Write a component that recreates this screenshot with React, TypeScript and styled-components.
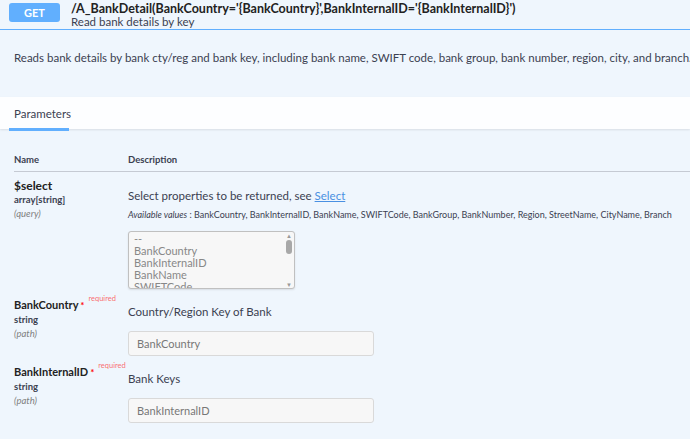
import styled, { createGlobalStyle } from "styled-components";

const Global = createGlobalStyle`
  body { margin: 0; background: #eff6fd; font-family: Lato, "Liberation Sans", sans-serif; color: #3b4151; }
`;

const params = [
  { name: "$select", type: "array[string]", where: "(query)", required: false },
  { name: "BankCountry", type: "string", where: "(path)", required: true, desc: "Country/Region Key of Bank" },
  { name: "BankInternalID", type: "string", where: "(path)", required: true, desc: "Bank Keys" },
];

export default function App() {
  return (
    <>
      <Global />
      <Page>
        <Summary>
          <Method>GET</Method>
          <PathBlock>
            <Path>/A_BankDetail(BankCountry='&#123;BankCountry&#125;',BankInternalID='&#123;BankInternalID&#125;')</Path>
            <SummaryText>Read bank details by key</SummaryText>
          </PathBlock>
        </Summary>
        <Description>
          Reads bank details by bank cty/reg and bank key, including bank name, SWIFT code, bank group, bank number, region, city, and branch.
        </Description>
        <TabBar>
          <Tab>Parameters</Tab>
        </TabBar>
        <Table>
          <HeadRow>
            <HeadCell>Name</HeadCell>
            <HeadCell>Description</HeadCell>
          </HeadRow>
          {params.map((p) => (
            <Row key={p.name} $first={p.name === "$select"}>
              <NameCell>
                <ParamName $big={p.name === "$select"}>
                  {p.name}
                  {p.required && (
                    <>
                      <Star> *</Star>
                      <Required>required</Required>
                    </>
                  )}
                </ParamName>
                <ParamType>{p.type}</ParamType>
                <ParamIn>{p.where}</ParamIn>
              </NameCell>
              <DescCell>
                {p.name === "$select" ? (
                  <>
                    <DescText>
                      Select properties to be returned, see <Link href="#">Select</Link>
                    </DescText>
                    <Avail>
                      <i>Available values</i> : BankCountry, BankInternalID, BankName, SWIFTCode, BankGroup, BankNumber, Region, StreetName, CityName, Branch
                    </Avail>
                    <MultiSelect>
                      <Options>
                        <Opt>--</Opt>
                        <Opt>BankCountry</Opt>
                        <Opt>BankInternalID</Opt>
                        <Opt>BankName</Opt>
                        <Opt>SWIFTCode</Opt>
                      </Options>
                      <Scroll>
                        <Arrow>▲</Arrow>
                        <Thumb />
                        <Arrow>▼</Arrow>
                      </Scroll>
                    </MultiSelect>
                  </>
                ) : (
                  <>
                    <DescText>{p.desc}</DescText>
                    <Input placeholder={p.name} />
                  </>
                )}
              </DescCell>
            </Row>
          ))}
        </Table>
      </Page>
    </>
  );
}

const Page = styled.div`
  width: 690px;
  height: 439px;
  overflow: hidden;
`;

const Summary = styled.div`
  display: flex;
  align-items: flex-start;
  gap: 11px;
  padding: 3px 9px 3px;
  border-bottom: 1px solid #61affe;
  height: 23px;
`;

const Method = styled.div`
  width: 51px;
  height: 19px;
  border-radius: 3px;
  background: #61affe;
  color: #fff;
  font-weight: 700;
  font-size: 11px;
  display: flex;
  align-items: center;
  justify-content: center;
`;

const PathBlock = styled.div`
  display: flex;
  flex-direction: column;
  margin-top: -2px;
`;

const Path = styled.div`
  font-size: 12.5px;
  font-weight: 700;
  color: #222;
  line-height: 15px;
`;

const SummaryText = styled.div`
  font-size: 11.5px;
  line-height: 11px;
  color: #3b4151;
`;

const Description = styled.div`
  font-size: 11.5px;
  padding: 19px 14px 21px;
  height: 18px;
  line-height: 18px;
  white-space: nowrap;
`;

const TabBar = styled.div`
  margin-top: 9px;
  background: rgba(255, 255, 255, 0.85);
  height: 32px;
  padding-left: 9px;
  box-shadow: 0 1px 2px rgba(0, 0, 0, 0.1);
  display: flex;
  align-items: stretch;
`;

const Tab = styled.div`
  font-size: 11.5px;
  padding: 0 5px;
  width: 50px;
  display: flex;
  align-items: center;
  border-bottom: 3px solid #61affe;
  margin-bottom: -2px;
  padding-top: 1px;
`;

const Table = styled.div`
  padding-left: 14px;
  margin-top: 25px;
`;

const HeadRow = styled.div`
  display: grid;
  grid-template-columns: 114px 1fr;
  border-bottom: 1px solid #c5cad3;
  padding-bottom: 6px;
  font-size: 9.5px;
  font-weight: 700;
`;

const HeadCell = styled.div``;

const Row = styled.div<{ $first: boolean }>`
  display: grid;
  grid-template-columns: 114px 1fr;
  padding-top: ${(p) => (p.$first ? "6px" : "0")};
  margin-bottom: 5px;
`;

const NameCell = styled.div`
  display: flex;
  flex-direction: column;
`;

const ParamName = styled.div<{ $big: boolean }>`
  font-weight: 700;
  font-size: ${(p) => (p.$big ? "12px" : "11px")};
  color: #222;
  line-height: 15px;
  white-space: nowrap;
`;

const Star = styled.span`
  color: #f00;
  font-size: 9px;
`;

const Required = styled.sup`
  color: rgba(255, 0, 0, 0.6);
  font-size: 7.5px;
  font-weight: 400;
  margin-left: 4px;
  position: relative;
  top: -3px;
`;

const ParamType = styled.div`
  font-size: 9.5px;
  font-weight: 700;
  line-height: 14px;
`;

const ParamIn = styled.div`
  font-size: 9.5px;
  font-style: italic;
  color: #808080;
  line-height: 14px;
`;

const DescCell = styled.div`
  padding-top: 10px;
`;

const DescText = styled.div`
  font-size: 11.5px;
  line-height: 15px;
`;

const Link = styled.a`
  color: #4990e2;
`;

const Avail = styled.div`
  font-size: 9px;
  margin-top: 6px;
  white-space: nowrap;
`;

const MultiSelect = styled.div`
  margin-top: 11px;
  width: 165px;
  height: 56px;
  border: 1px solid #c0c0c0;
  border-radius: 3px;
  background: #f7f7f7;
  display: flex;
  overflow: hidden;
  box-shadow: 0 1px 2px rgba(0, 0, 0, 0.1);
`;

const Options = styled.div`
  flex: 1;
  padding: 1px 5px;
  font-size: 11px;
  color: #888;
  line-height: 12px;
  overflow: hidden;
`;

const Opt = styled.div``;

const Scroll = styled.div`
  width: 10px;
  display: flex;
  flex-direction: column;
  align-items: center;
  justify-content: space-between;
`;

const Arrow = styled.div`
  font-size: 6px;
  color: #999;
`;

const Thumb = styled.div`
  width: 6px;
  height: 14px;
  border-radius: 3px;
  background: #a8a8a8;
  margin-bottom: auto;
  margin-top: 1px;
`;

const Input = styled.input`
  display: block;
  margin-top: 12px;
  width: 246px;
  height: 25px;
  box-sizing: border-box;
  border: 1px solid #d9d9d9;
  border-radius: 3px;
  background: #f7f7f7;
  padding: 0 8px;
  font-family: inherit;
  font-size: 11px;
  &::placeholder { color: #777; }
`;
